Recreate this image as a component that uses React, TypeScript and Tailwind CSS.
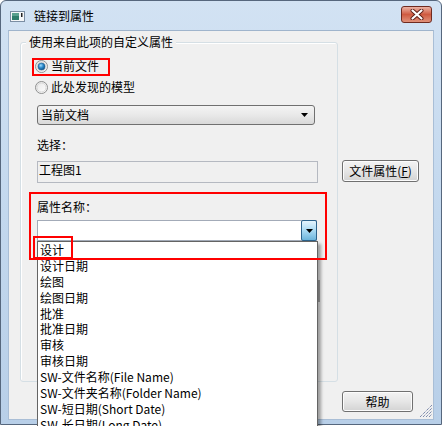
import React from "react";

const font = { fontFamily: '"Noto Sans CJK SC", "Noto Sans", sans-serif' };

function Radio({ checked }: { checked?: boolean }) {
  return (
    <svg width="13" height="13" viewBox="0 0 13 13" className="shrink-0">
      <defs>
        <linearGradient id={checked ? "rg1" : "rg2"} x1="0" y1="0" x2="1" y2="1">
          <stop offset="0" stopColor="#e6e6e6" />
          <stop offset="1" stopColor="#ffffff" />
        </linearGradient>
        <radialGradient id="dot" cx="0.4" cy="0.35" r="0.7">
          <stop offset="0" stopColor="#9fdcff" />
          <stop offset="0.5" stopColor="#2a88c9" />
          <stop offset="1" stopColor="#0b4f86" />
        </radialGradient>
      </defs>
      <circle cx="6.5" cy="6.5" r="6" fill={`url(#${checked ? "rg1" : "rg2"})`} stroke="#8e8f8f" />
      <circle cx="6.5" cy="6.5" r="4.5" fill="none" stroke="#d8d8d8" />
      {checked && <circle cx="6.5" cy="6.5" r="3.5" fill="url(#dot)" stroke="#1e5b8a" strokeWidth="0.6" />}
    </svg>
  );
}

function Arrow() {
  return (
    <svg width="7" height="4" viewBox="0 0 7 4">
      <path d="M0 0H7L3.5 4Z" fill="#000" />
    </svg>
  );
}

const items = [
  "设计",
  "设计日期",
  "绘图",
  "绘图日期",
  "批准",
  "批准日期",
  "审核",
  "审核日期",
  "SW-文件名称(File Name)",
  "SW-文件夹名称(Folder Name)",
  "SW-短日期(Short Date)",
  "SW-长日期(Long Date)",
];

export default function App() {
  return (
    <div className="w-[442px] h-[426px] bg-white overflow-hidden relative text-[12px] text-black" style={font}>
      <div className="w-[442px] h-[425px] rounded-t-[6px] border border-[#56677d] bg-linear-to-b from-[#d2e2f3] via-[#c3d8ee] to-[#b8cfe8] flex flex-col">
        {/* Title bar */}
        <div className="h-[29px] flex items-center pl-[9px] pr-[9px] shrink-0">
          <svg width="15" height="11" viewBox="0 0 15 11" className="mt-[1px]">
            <rect x="0.5" y="0.5" width="14" height="10" fill="#f4f6f8" stroke="#7b8ea3" />
            <rect x="2" y="2" width="7" height="7" fill="#2f7d6b" />
            <rect x="2" y="2" width="7" height="3" fill="#5aa08e" />
            <rect x="11" y="2" width="1.5" height="4" fill="#222" />
          </svg>
          <span className="ml-[9px] leading-[16px] mt-[1px]">链接到属性</span>
          <div className="ml-auto mt-[-2px] w-[31px] h-[17px] rounded-[3px] border border-[#6f2a1f] bg-linear-to-b from-[#eab2a4] via-[#cf5a40] to-[#e0917a] flex items-center justify-center">
            <svg width="14" height="11" viewBox="0 0 14 11">
              <path d="M2.5 1.5L11.5 9.5M11.5 1.5L2.5 9.5" stroke="#5b1c14" strokeWidth="4" strokeLinecap="round" />
              <path d="M2.5 1.5L11.5 9.5M11.5 1.5L2.5 9.5" stroke="#ffffff" strokeWidth="2.2" strokeLinecap="round" />
            </svg>
          </div>
        </div>

        {/* Client area */}
        <div className="mx-[7px] h-[390px] bg-[#f0f0f0] border border-[#a9bed6] border-t-[#9fb4cc] relative flex pl-[11px] shrink-0">
          {/* Group box */}
          <div className="mt-[11px] w-[318px] h-[340px] border border-[#d5dfe5] rounded-[3px] relative pl-[16px] flex flex-col shadow-[inset_1px_1px_0_#ffffff]">
            <span className="absolute left-[5px] top-[-9px] px-[3px] bg-[#f0f0f0] leading-[16px]">使用来自此项的自定义属性</span>

            <div className="mt-[13px] h-[20px] flex items-center ml-[-2px]">
              <Radio checked />
              <span className="ml-[3px] leading-[16px]">当前文件</span>
            </div>
            <div className="mt-[1px] h-[20px] flex items-center ml-[-2px]">
              <Radio />
              <span className="ml-[3px] leading-[16px]">此处发现的模型</span>
            </div>

            <div className="mt-[8px] w-[278px] h-[20px] rounded-[3px] border border-[#707070] bg-linear-to-b from-[#f4f4f4] via-[#e9e9e9] to-[#d9d9d9] flex items-center pl-[3px] pr-[6px]">
              <span className="leading-[16px]">当前文档</span>
              <span className="ml-auto flex"><Arrow /></span>
            </div>

            <div className="mt-[12px] h-[16px] leading-[16px]">选择：</div>

            <div className="mt-[8px] w-[281px] h-[22px] border border-[#b5b9c1] bg-[#f0f0f0] pl-[1px] leading-[16px]">工程图1</div>

            <div className="mt-[16px] h-[16px] leading-[16px]">属性名称：</div>

            <div className="mt-[5px] w-[280px] h-[21px] relative flex border border-[#a3abb8] bg-white">
              <div className="flex-1" />
              <div className="w-[16px] h-[21px] mt-[-1px] mr-[-1px] rounded-[2px] border border-[#2c628b] bg-linear-to-b from-[#e5f4fc] via-[#a9daf3] to-[#6cb5dc] flex items-center justify-center">
                <Arrow />
              </div>

              {/* Drop-down list */}
              <div className="absolute left-[-1px] top-[20px] w-[281px] bg-white border border-[#646464] shadow-[3px_3px_3px_rgba(0,0,0,0.35)] z-10">
                {items.map((t) => (
                  <div key={t} className="h-[15.9px] leading-[16px] pl-[2px] whitespace-nowrap">
                    {t}
                  </div>
                ))}
                <div className="h-[10px]" />
              </div>
            </div>
          </div>

          {/* Right column */}
          <div className="ml-[4px] flex flex-col pb-[7px]">
            <button className="mt-[129px] w-[77px] h-[22px] rounded-[3px] border border-[#707070] bg-linear-to-b from-[#f3f3f3] via-[#e6e6e6] to-[#d3d3d3] shadow-[inset_0_0_0_1px_#fcfcfc] leading-[16px]">
              文件属性(<span className="underline">F</span>)
            </button>
            <button className="mt-auto w-[71px] h-[21px] rounded-[3px] border border-[#707070] bg-linear-to-b from-[#f3f3f3] via-[#e6e6e6] to-[#d3d3d3] shadow-[inset_0_0_0_1px_#fcfcfc] leading-[16px]">
              帮助
            </button>
          </div>

          {/* Size grip */}
          <svg className="absolute right-[1px] bottom-[2px]" width="14" height="14" viewBox="0 0 14 14">
            {[2, 5, 8, 11].map((o) => (
              <path key={o} d={`M${o} 14L14 ${o}`} stroke="#4c5f8f" strokeWidth="1" strokeDasharray="1 1" />
            ))}
          </svg>
        </div>
        <div className="flex-1" />
      </div>

      {/* Hidden control edge peeking beside list shadow */}
      <div className="absolute left-[317px] top-[280px] w-[3px] h-[22px] bg-[#a8a8a8] z-0" />

      {/* Red annotation boxes */}
      <div className="absolute left-[32px] top-[58px] w-[78px] h-[18px] border-2 border-[#ff0000] z-20" />
      <div className="absolute left-[29px] top-[192px] w-[298px] h-[68px] border-2 border-[#ff0000] z-20" />
      <div className="absolute left-[33px] top-[236px] w-[40px] h-[23px] border-2 border-[#ff0000] z-20" />
    </div>
  );
}
